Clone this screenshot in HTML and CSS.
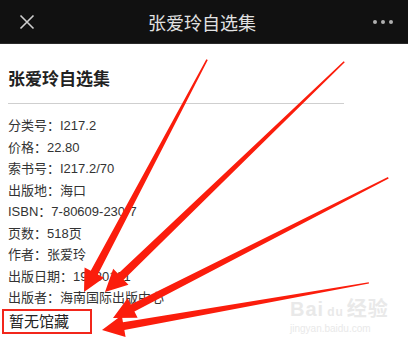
FILE: index.html
```html
<!DOCTYPE html>
<html lang="zh-CN">
<head>
  <meta charset="UTF-8" />
  <meta name="viewport" content="width=device-width, initial-scale=1.0"/>
  <title>张爱玲自选集</title>
  <link rel="stylesheet" href="styles.css">
</head>
<body>

  <div class="top-bar">
    <svg class="close-icon" width="16" height="16" viewBox="0 0 16 16">
      <path d="M1.5 1.5 L14.5 14.5 M14.5 1.5 L1.5 14.5" stroke="#cfcfcf" stroke-width="1.6" fill="none"/>
    </svg>
    <div class="top-title">张爱玲自选集</div>
    <div class="more-dots"><span></span><span></span><span></span></div>
  </div>

  <div class="book-detail">
    <h1 class="book-title">张爱玲自选集</h1>
    <ul class="book-info">
      <li>分类号：I217.2</li>
      <li>价格：22.80</li>
      <li>索书号：I217.2/70</li>
      <li>出版地：海口</li>
      <li>ISBN：7-80609-230-7</li>
      <li>页数：518页</li>
      <li>作者：张爱玲</li>
      <li>出版日期：19980101</li>
      <li>出版者：海南国际出版中心</li>
    </ul>
    <div class="holding-status">暂无馆藏</div>
  </div>

  <div class="watermark">
    <div class="wm-logo">Bai<span class="wm-paw">du</span>经验</div>
    <div class="wm-url">jingyan.baidu.com</div>
  </div>

  <!-- annotation arrows drawn over the page -->
  <svg class="arrows" width="408" height="343" viewBox="0 0 408 343">
    <g fill="#fb1d0c">
      <polygon transform="translate(84 292) rotate(117.9)" points="-263,-0.8 -22,-4 -22,-11 0,0 -22,11 -22,4 -263,0.8"/>
      <polygon transform="translate(105 292) rotate(136.1)" points="-332,-0.8 -22,-4 -22,-11 0,0 -22,11 -22,4 -332,0.8"/>
      <polygon transform="translate(113 318) rotate(153)" points="-309,-0.8 -22,-4 -22,-11 0,0 -22,11 -22,4 -309,0.8"/>
      <polygon transform="translate(102 330) rotate(170)" points="-271,-0.6 -22,-4 -22,-11 0,0 -22,11 -22,4 -271,0.6"/>
    </g>
  </svg>

</body>
</html>
```

FILE: styles.css
```css
body {
  margin: 0;
  padding: 0;
  width: 408px;
  height: 343px;
  overflow: hidden;
  background: #fff;
  font-family: "Liberation Sans", "Noto Sans CJK SC", sans-serif;
  color: #333;
  position: relative;
}

.top-bar {
  height: 44px;
  background: #111;
  display: flex;
  align-items: center;
  padding: 0 15px 0 19px;
  border-bottom: 1px solid #2a2a2a;
  box-sizing: border-box;
}

.close-icon {
  display: block;
  width: 16px;
  height: 16px;
}

.top-title {
  flex: 1;
  text-align: center;
  color: #e2e2e2;
  font-size: 18px;
  padding-right: 4px;
}

.more-dots {
  display: flex;
  gap: 4px;
}

.more-dots span {
  width: 4px;
  height: 4px;
  border-radius: 50%;
  background: #b0b0b0;
}

.book-detail {
  padding: 0 0 0 8px;
}

.book-title {
  margin: 24px 0 0;
  width: 336px;
  font-size: 17px;
  line-height: 24px;
  font-weight: 600;
  color: #222;
  padding-bottom: 11px;
  border-bottom: 1px solid #cfcfcf;
}

.book-info {
  list-style: none;
  margin: 11px 0 0;
  padding: 0;
}

.book-info li {
  font-size: 13px;
  line-height: 21.5px;
  height: 21.5px;
  color: #333;
}

.holding-status {
  margin-left: -6px;
  width: 81px;
  height: 21px;
  border: 2px solid #f2261b;
  font-size: 15px;
  line-height: 21px;
  padding-left: 5px;
  color: #222;
}

.watermark {
  position: absolute;
  left: 290px;
  top: 298px;
  color: #e9e9e9;
}

.wm-logo {
  font-size: 20px;
  line-height: 22px;
  font-weight: bold;
  letter-spacing: 1px;
}

.wm-paw {
  font-size: 12px;
  margin: 0 3px;
}

.wm-url {
  font-size: 10px;
  line-height: 12px;
}

.arrows {
  position: absolute;
  left: 0;
  top: 0;
}
```
